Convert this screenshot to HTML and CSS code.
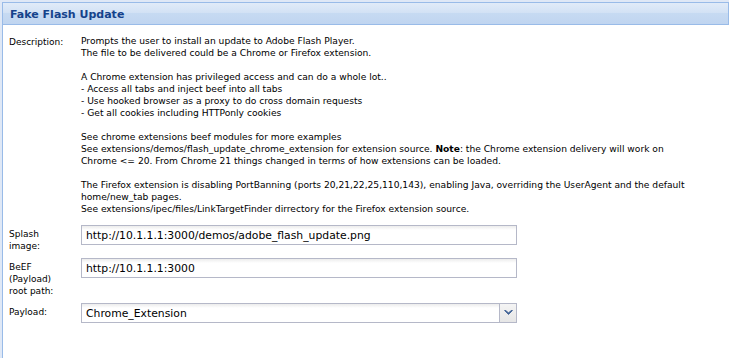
FILE: index.html
```html
<!DOCTYPE html>
<html lang="en">
<head>
    <meta charset="UTF-8">
    <title>Fake Flash Update</title>
    <link rel="stylesheet" href="styles.css">
</head>
<body>
    <div class="panel">
        <div class="panel-header">Fake Flash Update</div>
        <div class="panel-body">
            <div class="form-row form-row-desc">
                <label class="form-label">Description:</label>
                <div class="form-text">
                    Prompts the user to install an update to Adobe Flash Player.<br>
                    The file to be delivered could be a Chrome or Firefox extension.<br>
                    <br>
                    A Chrome extension has privileged access and can do a whole lot..<br>
                    - Access all tabs and inject beef into all tabs<br>
                    - Use hooked browser as a proxy to do cross domain requests<br>
                    - Get all cookies including HTTPonly cookies<br>
                    <br>
                    See chrome extensions beef modules for more examples<br>
                    See extensions/demos/flash_update_chrome_extension for extension source. <b>Note</b>: the Chrome extension delivery will work on<br>
                    Chrome &lt;= 20. From Chrome 21 things changed in terms of how extensions can be loaded.<br>
                    <br>
                    The Firefox extension is disabling PortBanning (ports 20,21,22,25,110,143), enabling Java, overriding the UserAgent and the default home/new_tab pages.<br>
                    See extensions/ipec/files/LinkTargetFinder dirrectory for the Firefox extension source.
                </div>
            </div>
            <div class="form-row">
                <label class="form-label">Splash image:</label>
                <input class="form-input" type="text" value="http://10.1.1.1:3000/demos/adobe_flash_update.png">
            </div>
            <div class="form-row">
                <label class="form-label">BeEF (Payload) root path:</label>
                <input class="form-input" type="text" value="http://10.1.1.1:3000">
            </div>
            <div class="form-row">
                <label class="form-label">Payload:</label>
                <div class="combo">
                    <input class="combo-input" type="text" value="Chrome_Extension" readonly>
                    <span class="combo-trigger">
                        <svg width="9" height="6" viewBox="0 0 9 6"><path d="M0.5 0.5 L4.5 4.5 L8.5 0.5 L7 0.5 L4.5 3 L2 0.5 Z" fill="#3d5f94" stroke="#3d5f94" stroke-width="0.8"/></svg>
                    </span>
                </div>
            </div>
        </div>
    </div>
</body>
</html>
```

FILE: styles.css
```css
body {
    margin: 0;
    padding: 0;
    background-color: #dfe8f6;
    font-family: "DejaVu Sans", sans-serif;
}

.panel {
    margin: 2px 0 0 2px;
    height: 356px;
    border-left: 1px solid #99bbe8;
    background-color: white;
    box-sizing: border-box;
}

.panel-header {
    height: 23px;
    box-sizing: border-box;
    padding: 5px 8px 0 7px;
    border-top: 1px solid #99bbe8;
    border-bottom: 1px solid #99bbe8;
    border-right: 1px solid #99bbe8;
    background: linear-gradient(to bottom, #e1ebf8 0%, #d3e2f5 45%, #c6daf2 50%, #c0d5f0 100%);
    color: #15428b;
    font-size: 11px;
    font-weight: bold;
    line-height: 13px;
}

.panel-body {
    padding: 8px 0 0 6px;
    font-size: 9px;
    line-height: 12px;
    color: #000;
}

.form-row {
    display: flex;
    align-items: flex-start;
    margin-bottom: 6px;
}

.form-row-desc {
    margin-bottom: 10px;
}

.form-label {
    width: 62px;
    flex-shrink: 0;
    padding-top: 3px;
    margin-right: 10px;
}

.form-text {
    padding-top: 2px;
    width: 640px;
    font-size: 9.15px;
}

.form-text b {
    font-weight: bold;
}

.form-input,
.combo {
    width: 436px;
    height: 20px;
    box-sizing: border-box;
    border: 1px solid #b5b8c8;
    background: linear-gradient(to bottom, #ececec 0px, #ffffff 4px);
    font-family: "DejaVu Sans", sans-serif;
    font-size: 10.8px;
    padding: 0 4px;
    margin: 0;
    outline: none;
}

.combo {
    display: flex;
    padding: 0;
}

.combo-input {
    flex: 1;
    border: none;
    background: transparent;
    font-family: "DejaVu Sans", sans-serif;
    font-size: 10.8px;
    padding: 0 4px;
    outline: none;
    min-width: 0;
}

.combo-trigger {
    width: 16px;
    border-left: 1px solid #b5b8c8;
    background: linear-gradient(to bottom, #f4f4f4, #e6e6e6);
    display: flex;
    align-items: center;
    justify-content: center;
}
```
